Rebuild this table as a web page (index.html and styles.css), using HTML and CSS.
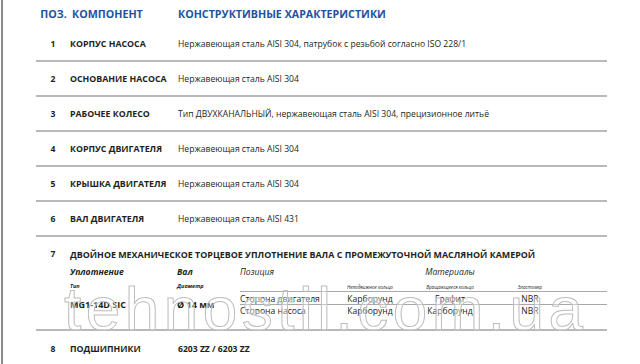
FILE: index.html
```html
<!DOCTYPE html>
<html lang="ru">
<head>
<meta charset="utf-8">
<title>Компоненты насоса</title>
<link rel="stylesheet" href="styles.css">
</head>
<body>
<div class="page">
  <div class="sheet">
    <div class="head">
      <span class="c-num">ПОЗ.</span>
      <span class="c-name">КОМПОНЕНТ</span>
      <span class="c-desc">КОНСТРУКТИВНЫЕ ХАРАКТЕРИСТИКИ</span>
    </div>
    <div class="row">
      <span class="c-num">1</span>
      <span class="c-name">КОРПУС НАСОСА</span>
      <span class="c-desc">Нержавеющая сталь AISI 304, патрубок с резьбой согласно ISO 228/1</span>
    </div>
    <div class="row">
      <span class="c-num">2</span>
      <span class="c-name">ОСНОВАНИЕ НАСОСА</span>
      <span class="c-desc">Нержавеющая сталь AISI 304</span>
    </div>
    <div class="row">
      <span class="c-num">3</span>
      <span class="c-name">РАБОЧЕЕ КОЛЕСО</span>
      <span class="c-desc">Тип ДВУХКАНАЛЬНЫЙ, нержавеющая сталь AISI 304, прецизионное литьё</span>
    </div>
    <div class="row">
      <span class="c-num">4</span>
      <span class="c-name">КОРПУС ДВИГАТЕЛЯ</span>
      <span class="c-desc">Нержавеющая сталь AISI 304</span>
    </div>
    <div class="row">
      <span class="c-num">5</span>
      <span class="c-name">КРЫШКА ДВИГАТЕЛЯ</span>
      <span class="c-desc">Нержавеющая сталь AISI 304</span>
    </div>
    <div class="row">
      <span class="c-num">6</span>
      <span class="c-name">ВАЛ ДВИГАТЕЛЯ</span>
      <span class="c-desc">Нержавеющая сталь AISI 431</span>
    </div>
    <div class="row seal">
      <div class="seal-title">
        <span class="c-num">7</span>
        <span class="c-wide">ДВОЙНОЕ МЕХАНИЧЕСКОЕ ТОРЦЕВОЕ УПЛОТНЕНИЕ ВАЛА С ПРОМЕЖУТОЧНОЙ МАСЛЯНОЙ КАМЕРОЙ</span>
      </div>
      <div class="seal-grid">
        <span class="g-h1 bi" style="grid-column:1;grid-row:1">Уплотнение</span>
        <span class="g-h1 bi" style="grid-column:2;grid-row:1">Вал</span>
        <span class="g-h1 it" style="grid-column:3;grid-row:1">Позиция</span>
        <span class="g-h1 it center" style="grid-column:4 / 7;grid-row:1">Материалы</span>

        <span class="g-h2 bi" style="grid-column:1;grid-row:2">Тип</span>
        <span class="g-h2 bi" style="grid-column:2;grid-row:2">Диаметр</span>
        <span class="g-h3 center" style="grid-column:4;grid-row:2">Неподвижное кольцо</span>
        <span class="g-h3 center" style="grid-column:5;grid-row:2">Вращающееся кольцо</span>
        <span class="g-h3 center" style="grid-column:6;grid-row:2">Эластомер</span>

        <span class="rule" style="grid-row:2"></span>
        <span class="rule" style="grid-row:3"></span>

        <span class="g-big" style="grid-column:1;grid-row:3 / 5">MG1-14D SIC</span>
        <span class="g-big" style="grid-column:2;grid-row:3 / 5">Ø 14 мм</span>

        <span class="g-val" style="grid-column:3;grid-row:3">Сторона двигателя</span>
        <span class="g-val center" style="grid-column:4;grid-row:3">Карборунд</span>
        <span class="g-val center" style="grid-column:5;grid-row:3">Графит</span>
        <span class="g-val center" style="grid-column:6;grid-row:3">NBR</span>

        <span class="g-val" style="grid-column:3;grid-row:4">Сторона насоса</span>
        <span class="g-val center" style="grid-column:4;grid-row:4">Карборунд</span>
        <span class="g-val center" style="grid-column:5;grid-row:4">Карборунд</span>
        <span class="g-val center" style="grid-column:6;grid-row:4">NBR</span>
      </div>
    </div>
    <div class="row last">
      <span class="c-num">8</span>
      <span class="c-name">ПОДШИПНИКИ</span>
      <span class="c-desc strong">6203 ZZ / 6203 ZZ</span>
    </div>
  </div>
  <div class="watermark">tehnostil.com.ua</div>
</div>
</body>
</html>
```

FILE: styles.css
```css
html, body {
  margin: 0;
  padding: 0;
  background: #ffffff;
}

body {
  font-family: "Open Sans", "Noto Sans", sans-serif;
  color: #231f20;
  width: 640px;
  height: 364px;
  overflow: hidden;
}

.page {
  position: relative;
  height: 364px;
  margin-left: 1px;
  border-left: 2px solid #8a8a8a;
  padding-left: 33px;
}

.sheet {
  width: 571px;
}

.head,
.row {
  display: grid;
  grid-template-columns: 34px 107px 1fr;
  align-items: center;
  box-sizing: border-box;
}

.head {
  height: 27px;
  color: #1d539f;
  font-weight: 700;
  font-size: 10.7px;
}

.head .c-num {
  text-align: center;
  padding-left: 1px;
}

.head .c-name {
  padding-left: 2px;
}

.head .c-desc {
  padding-left: 1px;
}

.row {
  height: 35px;
  padding-top: 1px;
  border-bottom: 2px solid #b9b9b9;
  font-size: 8.6px;
}

.row .c-num {
  font-weight: 700;
  text-align: center;
}

.row .c-name {
  font-weight: 700;
  font-size: 8.8px;
}

.row .c-desc {
  padding-left: 1px;
}

.strong {
  font-weight: 700;
}

.row.seal {
  display: block;
  height: auto;
  padding-top: 10px;
  padding-bottom: 12px;
}

.seal-title {
  display: grid;
  grid-template-columns: 34px 1fr;
  height: 14px;
  align-items: center;
}

.c-wide {
  font-weight: 700;
  font-size: 8.9px;
  letter-spacing: 0px;
}

.seal-grid {
  display: grid;
  grid-template-columns: 107px 63px 95px 70px 90px 70px 1fr;
  grid-template-rows: 15px 13px 13px 12px;
  margin-left: 34px;
  margin-top: 3px;
  align-items: center;
}

.seal-grid > span {
  white-space: nowrap;
}

.center {
  text-align: center;
}

.bi {
  font-weight: 700;
  font-style: italic;
}

.it {
  font-style: italic;
}

.g-h1 {
  font-size: 8.6px;
}

.g-h2 {
  font-size: 5.6px;
  align-self: end;
  padding-bottom: 2px;
}

.g-h3 {
  font-size: 4.6px;
  font-style: italic;
  align-self: end;
  padding-bottom: 2px;
}

.g-big {
  font-weight: 700;
  font-size: 9px;
}

.g-val {
  font-size: 8.6px;
}

.rule {
  grid-column: 3 / -1;
  align-self: end;
  height: 0;
  border-bottom: 1px solid #a8a8a8;
}

.row.last {
  border-bottom: none;
}

.watermark {
  position: absolute;
  left: 61px;
  top: 278px;
  font-family: "Liberation Sans", Arial, sans-serif;
  font-size: 62px;
  line-height: 1;
  letter-spacing: 4.5px;
  color: rgba(255, 255, 255, 0.35);
  -webkit-text-stroke: 1px #bdbdbd;
  white-space: nowrap;
  pointer-events: none;
}
```
